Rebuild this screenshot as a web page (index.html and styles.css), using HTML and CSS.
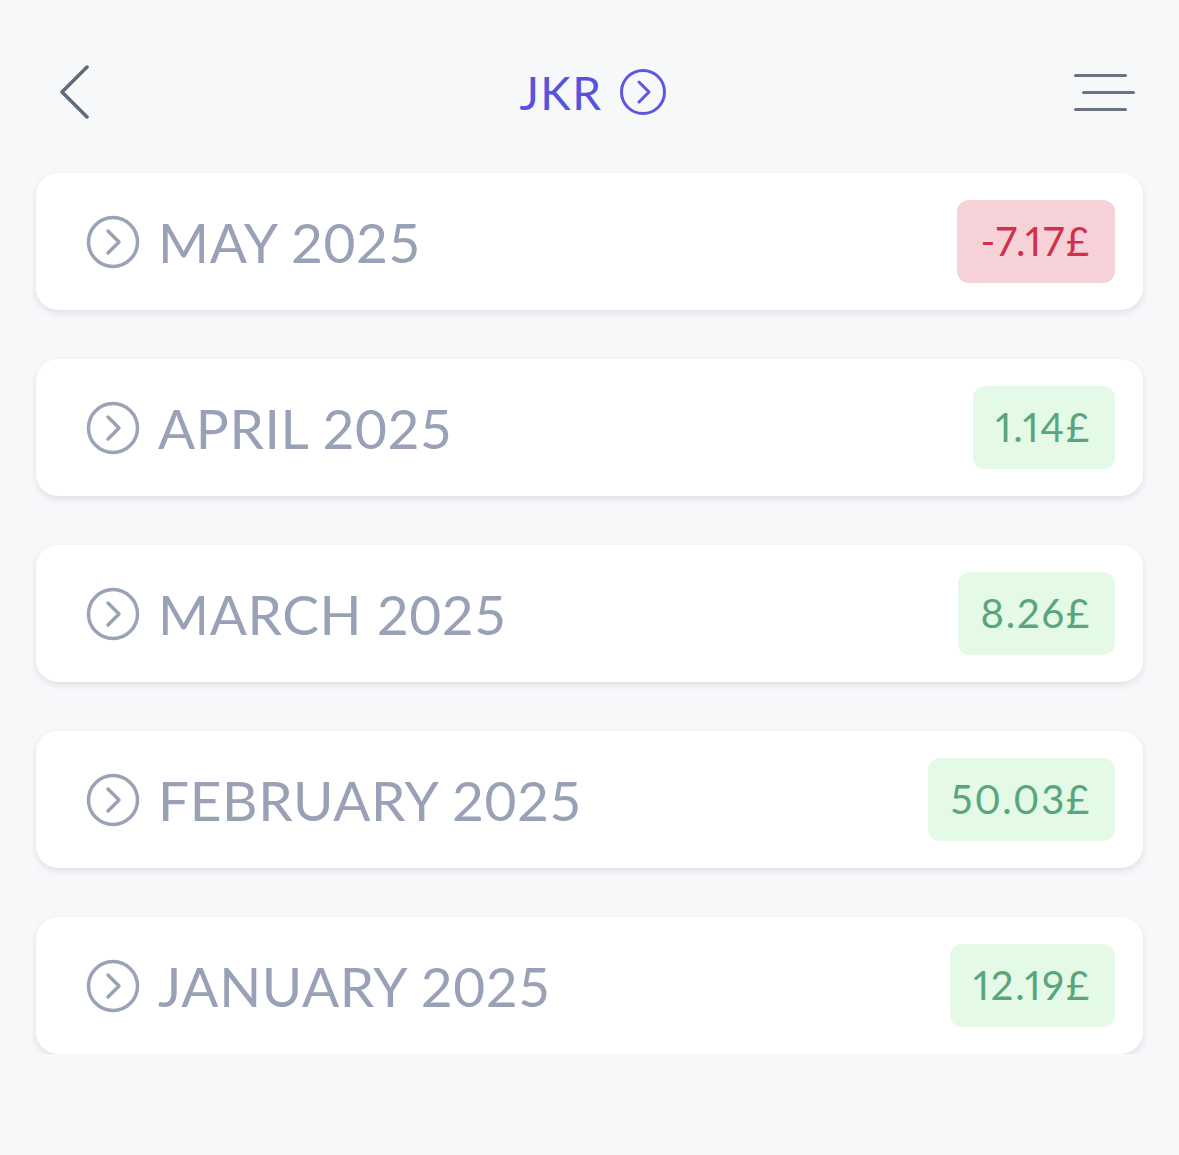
FILE: index.html
```html
<!DOCTYPE html>
<html lang="en">
<head>
    <meta charset="UTF-8">
    <title>JKR</title>
    <meta name="viewport" content="width=device-width, initial-scale=1">
    <link rel="stylesheet" href="styles.css">
</head>
<body>
    <header class="topbar">
        <a class="back" href="#">
            <svg width="30" height="54" viewBox="0 0 30 54" fill="none"><path d="M27 2L2 27l25 25" stroke="#5f6b7b" stroke-width="3.5" stroke-linecap="round" stroke-linejoin="round"/></svg>
        </a>
        <div class="title">
            <span>JKR</span>
            <svg width="48" height="48" viewBox="0 0 48 48" fill="none"><circle cx="24" cy="24" r="21.5" stroke="#5b57df" stroke-width="3"/><path d="M20 14l10 10-10 10" stroke="#5b57df" stroke-width="3" stroke-linecap="round" stroke-linejoin="round"/></svg>
        </div>
        <a class="menu" href="#">
            <span class="line"></span>
            <span class="line shift"></span>
            <span class="line"></span>
        </a>
    </header>

    <main class="months">
        <div class="month">
            <div class="name">
                <svg width="54" height="54" viewBox="0 0 54 54" fill="none"><circle cx="27" cy="27" r="24.5" stroke="#9aa3b6" stroke-width="3.5"/><path d="M22 16l11 11-11 11" stroke="#9aa3b6" stroke-width="3.5" stroke-linecap="round" stroke-linejoin="round"/></svg>
                MAY 2025
            </div>
            <span class="amount neg">-7.17£</span>
        </div>
        <div class="month">
            <div class="name">
                <svg width="54" height="54" viewBox="0 0 54 54" fill="none"><circle cx="27" cy="27" r="24.5" stroke="#9aa3b6" stroke-width="3.5"/><path d="M22 16l11 11-11 11" stroke="#9aa3b6" stroke-width="3.5" stroke-linecap="round" stroke-linejoin="round"/></svg>
                APRIL 2025
            </div>
            <span class="amount pos">1.14£</span>
        </div>
        <div class="month">
            <div class="name">
                <svg width="54" height="54" viewBox="0 0 54 54" fill="none"><circle cx="27" cy="27" r="24.5" stroke="#9aa3b6" stroke-width="3.5"/><path d="M22 16l11 11-11 11" stroke="#9aa3b6" stroke-width="3.5" stroke-linecap="round" stroke-linejoin="round"/></svg>
                MARCH 2025
            </div>
            <span class="amount pos">8.26£</span>
        </div>
        <div class="month">
            <div class="name">
                <svg width="54" height="54" viewBox="0 0 54 54" fill="none"><circle cx="27" cy="27" r="24.5" stroke="#9aa3b6" stroke-width="3.5"/><path d="M22 16l11 11-11 11" stroke="#9aa3b6" stroke-width="3.5" stroke-linecap="round" stroke-linejoin="round"/></svg>
                FEBRUARY 2025
            </div>
            <span class="amount pos">50.03£</span>
        </div>
        <div class="month">
            <div class="name">
                <svg width="54" height="54" viewBox="0 0 54 54" fill="none"><circle cx="27" cy="27" r="24.5" stroke="#9aa3b6" stroke-width="3.5"/><path d="M22 16l11 11-11 11" stroke="#9aa3b6" stroke-width="3.5" stroke-linecap="round" stroke-linejoin="round"/></svg>
                JANUARY 2025
            </div>
            <span class="amount pos">12.19£</span>
        </div>
    </main>
</body>
</html>
```

FILE: styles.css
```css
body {
    background: #f7f8fa;
    font-family: Lato, 'Noto Sans', Arial, sans-serif;
    margin: 0;
    padding: 0 36px;
}
.topbar {
    display: flex;
    align-items: center;
    justify-content: space-between;
    height: 90px;
    padding-top: 47px;
    margin-bottom: 36px;
}
.back {
    display: flex;
    margin-left: 24px;
}
.title {
    display: flex;
    align-items: center;
    gap: 16px;
    color: #5653dc;
    font-size: 46px;
    letter-spacing: 1.5px;
    margin-left: 22px;
}
.menu {
    display: flex;
    flex-direction: column;
    align-items: flex-start;
    gap: 14px;
    width: 60px;
    margin-right: 9px;
}
.menu .line {
    display: block;
    width: 53px;
    height: 3px;
    border-radius: 2px;
    background: #6b7382;
}
.menu .line.shift {
    margin-left: 8px;
}
.months {
    display: flex;
    flex-direction: column;
    gap: 49px;
}
.month {
    display: flex;
    align-items: center;
    justify-content: space-between;
    height: 137px;
    padding: 0 28px 0 50px;
    background: #fff;
    border-radius: 22px;
    box-shadow: 0 3px 7px rgba(30, 40, 60, 0.11);
}
.name {
    display: flex;
    align-items: center;
    gap: 18px;
    color: #98a1b5;
    font-size: 55px;
    letter-spacing: 0.6px;
}
.amount {
    padding: 14px 24px 14px 23px;
    border-radius: 12px;
    font-size: 40px;
    line-height: 55px;
    letter-spacing: 1.8px;
    font-variant-numeric: proportional-nums;
}
.neg {
    background: #f6d1d7;
    color: #d1304a;
}
.pos {
    background: #e4f9e6;
    color: #5aa67c;
}
```
